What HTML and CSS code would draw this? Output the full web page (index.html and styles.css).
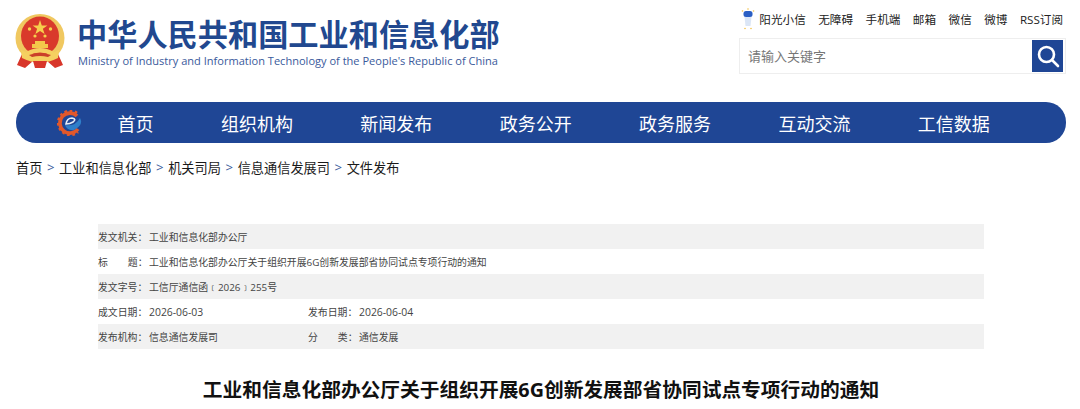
FILE: index.html
```html
<!DOCTYPE html>
<html lang="zh-CN">
<head>
    <meta charset="UTF-8">
    <title>工业和信息化部办公厅关于组织开展6G创新发展部省协同试点专项行动的通知</title>
    <link rel="stylesheet" href="styles.css">
</head>
<body>
    <header class="site-head">
        <a class="brand" href="#">
            <svg class="emblem" viewBox="0 0 50 56" width="50" height="56">
                <path d="M7 40 L2 51 L10 54 L18 47 Z M43 40 L48 51 L40 54 L32 47 Z" fill="#d8362a"/>
                <ellipse cx="25" cy="24" rx="24.5" ry="24" fill="#f0c860"/>
                <ellipse cx="25" cy="22" rx="19" ry="19.5" fill="#d93a2b"/>
                <polygon points="25,6 26.8,11.4 32.4,11.4 27.9,14.8 29.6,20 25,16.9 20.4,20 22.1,14.8 17.6,11.4 23.2,11.4" fill="#f6d04d"/>
                <circle cx="14.5" cy="15" r="1.7" fill="#f6d04d"/>
                <circle cx="35.5" cy="15" r="1.7" fill="#f6d04d"/>
                <circle cx="20" cy="22" r="1.6" fill="#f6d04d"/>
                <circle cx="30" cy="22" r="1.6" fill="#f6d04d"/>
                <path d="M17 34 V30 H20 V27 H30 V30 H33 V34 Z" fill="#f3c94a"/>
                <path d="M6 36 Q25 46 44 36 L43 44 Q25 53 7 44 Z" fill="#f5d060"/>
                <path d="M11 38 Q25 30 39 38 L36 41 Q25 36 14 41 Z" fill="#f5d060"/>
                <path d="M14 41 Q25 37 36 41 L33 43 Q25 41 17 43 Z" fill="#c9412a"/>
                <path d="M18 47 H32 L30 54 H20 Z" fill="#d8362a"/>
            </svg>
            <span class="brand-text">
                <span class="brand-cn">中华人民共和国工业和信息化部</span>
                <span class="brand-en">Ministry of Industry and Information Technology of the People's Republic of China</span>
            </span>
        </a>
        <div class="head-right">
            <div class="quick-links">
                <svg class="sun-icon" viewBox="0 0 14 22" width="14" height="22">
                    <rect x="2.5" y="3" width="9" height="6" rx="2.5" fill="#2a5fc4"/>
                    <path d="M3.5 9 H10.5 L9.5 18 H4.5 Z" fill="#dbe6f6"/>
                    <circle cx="1.5" cy="3" r="0.8" fill="#f2c14a"/>
                    <circle cx="7" cy="1" r="0.8" fill="#f2c14a"/>
                    <circle cx="12.5" cy="3" r="0.8" fill="#f2c14a"/>
                    <circle cx="4" cy="20.5" r="0.8" fill="#f2c14a"/>
                    <circle cx="10" cy="20.5" r="0.8" fill="#f2c14a"/>
                </svg>
                <a href="#" class="first-link">阳光小信</a>
                <a href="#">无障碍</a>
                <a href="#">手机端</a>
                <a href="#">邮箱</a>
                <a href="#">微信</a>
                <a href="#">微博</a>
                <a href="#">RSS订阅</a>
            </div>
            <div class="search-box">
                <input type="text" placeholder="请输入关键字">
                <button type="button" aria-label="搜索">
                    <svg viewBox="0 0 24 24" width="24" height="24" fill="none" stroke="#fff" stroke-width="2.6">
                        <circle cx="10.5" cy="10.5" r="7.5"/>
                        <path d="M16 16 L22 22" stroke-linecap="round"/>
                    </svg>
                </button>
            </div>
        </div>
    </header>

    <nav class="main-nav">
        <svg class="nav-logo" viewBox="0 0 26 26" width="26" height="26">
            <path d="M20 6 A10 10 0 1 0 21 19" fill="none" stroke="#e2582b" stroke-width="3.6"/>
            <path d="M20 3 A12 12 0 1 0 21 22" fill="none" stroke="#e2582b" stroke-width="2.6" stroke-dasharray="2.6 2.6"/>
            <path d="M8 15 Q18 17 23 8 Q27 15 17 20 Q10 21 8 15 Z" fill="#2f7fca"/>
            <path d="M9 14 Q10 8 15 8 Q20 9 16 12 Q13 14 9 14 Z" fill="none" stroke="#e8eef8" stroke-width="1.6"/>
        </svg>
        <a href="#">首页</a>
        <a href="#">组织机构</a>
        <a href="#">新闻发布</a>
        <a href="#">政务公开</a>
        <a href="#">政务服务</a>
        <a href="#">互动交流</a>
        <a href="#">工信数据</a>
    </nav>

    <div class="crumbs">
        <a href="#">首页</a><span>&gt;</span>
        <a href="#">工业和信息化部</a><span>&gt;</span>
        <a href="#">机关司局</a><span>&gt;</span>
        <a href="#">信息通信发展司</a><span>&gt;</span>
        <a href="#">文件发布</a>
    </div>

    <section class="doc-info">
        <div class="info-row">
            <div class="info-cell"><label>发文机关：</label>工业和信息化部办公厅</div>
        </div>
        <div class="info-row">
            <div class="info-cell"><label class="spread">标<i></i>题：</label>工业和信息化部办公厅关于组织开展6G创新发展部省协同试点专项行动的通知</div>
        </div>
        <div class="info-row">
            <div class="info-cell"><label>发文字号：</label>工信厅通信函﹝2026﹞255号</div>
        </div>
        <div class="info-row">
            <div class="info-cell half"><label>成文日期：</label><span class="date">2026-06-03</span></div>
            <div class="info-cell"><label>发布日期：</label><span class="date">2026-06-04</span></div>
        </div>
        <div class="info-row">
            <div class="info-cell half"><label>发布机构：</label>信息通信发展司</div>
            <div class="info-cell"><label class="spread">分<i></i>类：</label>通信发展</div>
        </div>
    </section>

    <h1 class="doc-title">工业和信息化部办公厅关于组织开展6G创新发展部省协同试点专项行动的通知</h1>
</body>
</html>
```

FILE: styles.css
```css
/* General Styles */
html, body {
    height: 409px;
    overflow: hidden;
}

body {
    margin: 0;
    padding: 0 14px 0 16px;
    background-color: #ffffff;
    color: #333333;
    font-family: "Open Sans", "Noto Sans CJK SC", sans-serif;
}

a {
    color: inherit;
    text-decoration: none;
}

/* Header */
.site-head {
    display: flex;
    justify-content: space-between;
    height: 102px;
}

.brand {
    display: flex;
    align-items: flex-start;
    gap: 12px;
    margin-left: -1px;
    padding-top: 14px;
}

.brand-text {
    display: flex;
    flex-direction: column;
    padding-top: 3px;
}

.brand-cn {
    color: #21488f;
    font-size: 30.2px;
    font-weight: 700;
    line-height: 36px;
    white-space: nowrap;
}

.brand-en {
    color: #3a5a9c;
    font-size: 11.05px;
    line-height: 16px;
    margin-left: 1px;
    white-space: nowrap;
}

.head-right {
    width: 327px;
}

.quick-links {
    display: flex;
    justify-content: flex-end;
    align-items: center;
    gap: 12.5px;
    height: 38px;
    padding-right: 3px;
    font-size: 11.6px;
    color: #222222;
    white-space: nowrap;
}

.sun-icon {
    margin-right: -8px;
}

.search-box {
    display: flex;
    justify-content: space-between;
    align-items: center;
    box-sizing: border-box;
    height: 36px;
    border: 1px solid #eeeeee;
    padding: 1px 2px 1px 0;
}

.search-box input {
    flex: 1;
    min-width: 0;
    border: none;
    outline: none;
    padding: 0 8px;
    font-family: inherit;
    font-size: 13px;
}

.search-box input::placeholder {
    color: #777777;
}

.search-box button {
    display: flex;
    align-items: center;
    justify-content: center;
    width: 31px;
    height: 32px;
    padding: 0;
    border: none;
    background-color: #1f4695;
}

/* Nav */
.main-nav {
    display: flex;
    align-items: center;
    height: 41px;
    padding-left: 41px;
    border-radius: 20px;
    background-color: #1f4695;
    color: #ffffff;
    font-size: 18px;
}

.nav-logo {
    margin-right: 34.5px;
}

.main-nav a {
    margin-right: 67.4px;
    white-space: nowrap;
}

/* Breadcrumb */
.crumbs {
    display: flex;
    align-items: center;
    height: 20px;
    margin-top: 14px;
    font-size: 13.2px;
    color: #1a1a1a;
}

.crumbs span {
    margin: 0 4.6px;
    color: #3a5a9c;
}

/* Doc info */
.doc-info {
    margin: 47px 82px 0;
    font-size: 9.85px;
    color: #444444;
}

.info-row {
    display: flex;
    align-items: center;
    height: 25px;
}

.info-row:nth-child(odd) {
    background-color: #f1f1f1;
}

.info-cell label {
    display: inline-block;
    width: 51px;
}

.info-cell .spread i {
    display: inline-block;
    width: 20px;
}

.date {
    font-size: 10.4px;
}

.half {
    width: 210px;
}

/* Title */
.doc-title {
    margin: 28px 0 0;
    color: #111111;
    font-size: 19.73px;
    font-weight: 700;
    line-height: 26px;
    text-align: center;
}
```
